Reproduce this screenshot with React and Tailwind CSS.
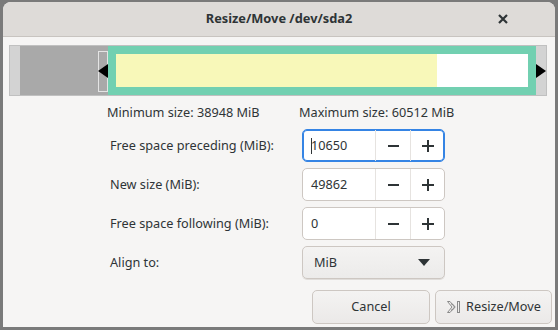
import React from 'react';

const font = { fontFamily: '"Noto Sans", "Open Sans", sans-serif' };

function SpinRow({ label, value, focused }) {
  return (
    <div className="flex items-center h-[33px]">
      <div className="w-[192px] pl-[107px] box-content text-[12.7px] text-[#2e3436] whitespace-nowrap">{label}</div>
      <div
        className={`flex h-full w-[143px] rounded-[5px] bg-white border ${
          focused ? 'border-[#3584e4] shadow-[inset_0_0_0_1px_#3584e4]' : 'border-[#cdc7c2]'
        }`}
      >
        <div className="flex items-center w-[72px] pl-[8px] text-[12.7px] text-[#2e3436]">
          {focused && <span className="w-px h-[16px] bg-[#2e3436] mr-[-1px]" />}
          {value}
        </div>
        <div className="flex items-center justify-center w-[35px] border-l border-[#e6e3e0]">
          <svg width="11" height="12" viewBox="0 0 11 12"><rect x="0" y="5" width="11" height="2" fill="#2e3436" /></svg>
        </div>
        <div className="flex items-center justify-center flex-1 border-l border-[#e6e3e0]">
          <svg width="12" height="12" viewBox="0 0 12 12"><rect x="0" y="5" width="12" height="2" fill="#2e3436" /><rect x="5" y="0" width="2" height="12" fill="#2e3436" /></svg>
        </div>
      </div>
    </div>
  );
}

export default function App() {
  return (
    <div className="w-[558px] h-[330px] bg-[#7a7a7a] overflow-hidden" style={font}>
      <div className="ml-[3px] mt-[2px] w-[552px] h-[325px] bg-[#f6f5f4] rounded-t-[8px] overflow-hidden flex flex-col">
        {/* Header */}
        <div className="relative h-[35px] shrink-0 bg-[#dedbd8] border-b border-[#c8c4c0] flex items-center justify-center">
          <span className="text-[12.8px] font-bold text-[#2e3436]">Resize/Move /dev/sda2</span>
          <svg className="absolute right-[47px] top-[12px]" width="10" height="10" viewBox="0 0 10 10">
            <path d="M1 1 L9 9 M9 1 L1 9" stroke="#2e3436" strokeWidth="2.2" />
          </svg>
        </div>

        {/* Partition bar */}
        <div className="mt-[8px] ml-[6px] w-[538px] h-[51px] bg-[#d3d3d3] border border-[#c0c0c0] flex items-stretch pl-[10px]">
          <div className="w-[88px] bg-[#a9a9a9] relative">
            <div className="absolute right-0 top-[5px] w-[10px] h-[41px] border border-[#e4e4e4]" />
            <svg className="absolute right-0 top-[18px]" width="10" height="14" viewBox="0 0 10 14">
              <polygon points="0,7 10,0 10,14" fill="#000" />
            </svg>
          </div>
          <div className="w-[428px] border-[8px] border-[#72d0b1] flex">
            <div className="w-[321px] bg-[#f8f8b9]" />
            <div className="flex-1 bg-white" />
          </div>
          <div className="flex-1 flex items-center">
            <svg width="10" height="14" viewBox="0 0 10 14">
              <polygon points="0,0 10,7 0,14" fill="#000" />
            </svg>
          </div>
        </div>

        {/* Min / max */}
        <div className="flex mt-[8px] h-[17px] items-center text-[12.7px] text-[#2e3436] whitespace-nowrap">
          <span className="pl-[104px] w-[296px]">Minimum size: 38948 MiB</span>
          <span>Maximum size: 60512 MiB</span>
        </div>

        <div className="flex flex-col gap-[6px] mt-[8px]">
          <SpinRow label="Free space preceding (MiB):" value="10650" focused />
          <SpinRow label="New size (MiB):" value="49862" />
          <SpinRow label="Free space following (MiB):" value="0" />
          <div className="flex items-center h-[33px]">
            <div className="w-[192px] pl-[107px] box-content text-[12.7px] text-[#2e3436]">Align to:</div>
            <div className="flex items-center justify-between h-full w-[143px] rounded-[5px] border border-[#cdc7c2] bg-gradient-to-b from-[#f4f3f2] to-[#ecebea] shadow-[0_1px_0_#e0ddda] pl-[11px] pr-[14px] text-[12.7px] text-[#2e3436]">
              <span>MiB</span>
              <svg width="12" height="7" viewBox="0 0 12 7"><polygon points="0,0 12,0 6,7" fill="#2e3436" /></svg>
            </div>
          </div>
        </div>

        {/* Buttons */}
        <div className="flex justify-end gap-[5px] mt-[11px] pr-[3px]">
          <button className="w-[118px] h-[34px] rounded-[5px] border border-[#cdc7c2] bg-gradient-to-b from-[#f4f3f2] to-[#ebe9e8] text-[12.7px] text-[#2e3436]">
            Cancel
          </button>
          <button className="w-[117px] h-[34px] rounded-[5px] border border-[#cdc7c2] bg-gradient-to-b from-[#f4f3f2] to-[#ebe9e8] text-[12.7px] text-[#2e3436] flex items-center justify-center gap-[4px]">
            <svg width="16" height="16" viewBox="0 0 16 16" fill="none" stroke="#8a8a8a" strokeWidth="1">
              <path d="M1.5 2.5 L4 2.5 L8.5 8 L4 13.5 L1.5 13.5 L6 8 Z" />
              <path d="M5 5 L6.5 5 L9.2 8 L6.5 11 L5 11" />
              <rect x="11.5" y="2.5" width="2" height="11" />
            </svg>
            Resize/Move
          </button>
        </div>
      </div>
    </div>
  );
}
